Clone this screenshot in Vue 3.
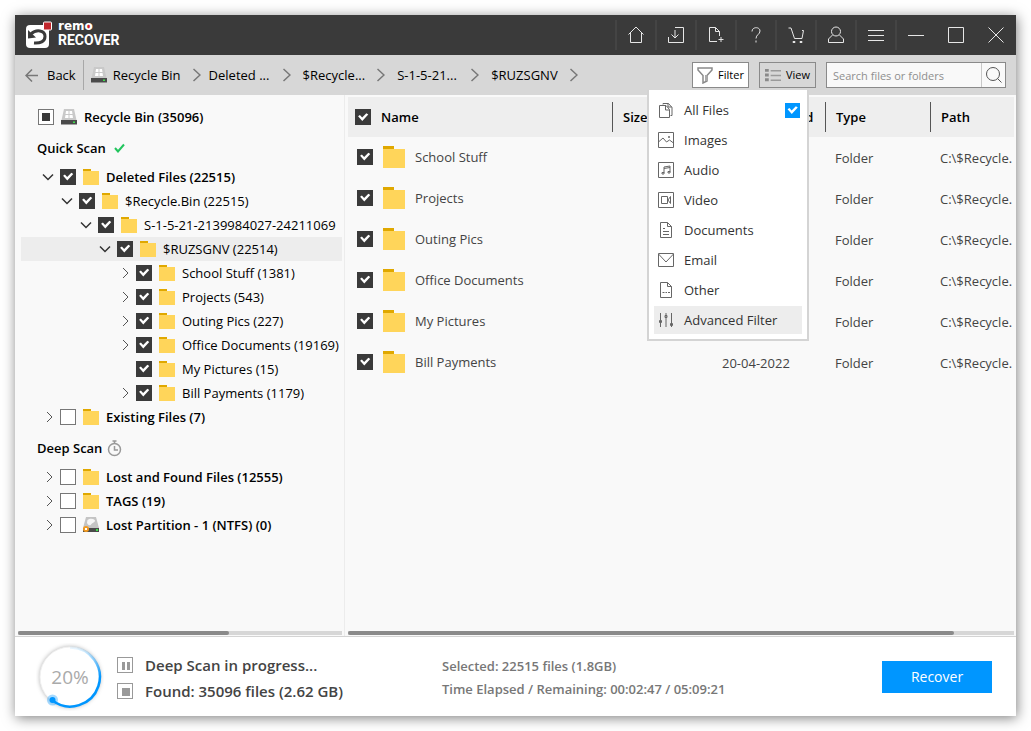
<script setup>
import { ref } from 'vue'

const quickScan = ref([
  { name: 'Deleted Files (22515)', level: 0, open: true, checked: true, bold: true },
  { name: '$Recycle.Bin (22515)', level: 1, open: true, checked: true },
  { name: 'S-1-5-21-2139984027-24211069', level: 2, open: true, checked: true },
  { name: '$RUZSGNV (22514)', level: 3, open: true, checked: true, active: true },
  { name: 'School Stuff (1381)', level: 4, checked: true },
  { name: 'Projects (543)', level: 4, checked: true },
  { name: 'Outing Pics (227)', level: 4, checked: true },
  { name: 'Office Documents (19169)', level: 4, checked: true },
  { name: 'My Pictures (15)', level: 4, checked: true, leaf: true },
  { name: 'Bill Payments (1179)', level: 4, checked: true },
  { name: 'Existing Files (7)', level: 0, checked: false, bold: true },
])
const deepScan = ref([
  { name: 'Lost and Found Files (12555)', level: 0, checked: false, bold: true },
  { name: 'TAGS (19)', level: 0, checked: false, bold: true },
  { name: 'Lost Partition - 1 (NTFS) (0)', level: 0, checked: false, bold: true, drive: true },
])
const sections = [
  { title: 'Quick Scan', done: true, nodes: quickScan },
  { title: 'Deep Scan', done: false, nodes: deepScan },
]
const crumbs = ['Recycle Bin', 'Deleted ...', '$Recycle...', 'S-1-5-21...', '$RUZSGNV']
const files = ref(
  [
    { name: 'School Stuff' },
    { name: 'Projects' },
    { name: 'Outing Pics' },
    { name: 'Office Documents' },
    { name: 'My Pictures' },
    { name: 'Bill Payments', date: '20-04-2022' },
  ].map((f) => ({ ...f, type: 'Folder', path: 'C:\\$Recycle.', checked: true })),
)
const allChecked = ref(true)
const allFiles = ref(true)

const tools = [
  { label: 'Home', d: 'M2.5 9.5 10 2l7.500 7.500M4.500 8v9.500h11V8' },
  { label: 'Import', d: 'M9 2.500h8.500v15h-15V12M9 5v8M5.500 9.500 9 13l3.500-3.500' },
  { label: 'New file', d: 'M11 16.500H3.500v-14h6l4 4V11M9.500 2.500v4h4M15 12v5M12.500 14.500h5' },
  { label: 'Help', d: 'M6 6.500c0-5 8-5 8-.5 0 3.500-4 3.500-4 7.500M10 15.500v2' },
  { label: 'Cart', d: 'M2.500 3H5l3.500 10.500H16L17.500 5.500M7 16.500h2v1H7zM14 16.500h2v1h-2zM16 5.500h1.500' },
  { label: 'Account', d: 'M10 2a4.500 4.500 0 1 1 0 9 4.500 4.500 0 1 1 0-9M6.500 10 2.500 14v3.500h15V14l-4-4' },
  { label: 'Menu', d: 'M2 5.500h16M2 10.500h16M2 15.500h16' },
  { label: 'Minimize', d: 'M2 10.500h16', plain: true },
  { label: 'Maximize', d: 'M2.500 2.500h15v15h-15z', plain: true },
  { label: 'Close', d: 'M2.500 2.500l15 15M17.500 2.500l-15 15', plain: true },
]
const filters = [
  { label: 'All Files', d: 'M1.500 3.500H8l3.500 4v8h-10zM7.500 3.500v4.500h4M5 2.500V1.500h5.500l3.500 4v8h-1.500M10 1.500v3.500h4' },
  { label: 'Images', d: 'M.5.5h15v15H.5zM.5 10 5 6l3.500 4 3-2 4 3M10.500 4.500h1v1h-1z' },
  { label: 'Audio', d: 'M.5.5h15v15H.5zM6 11V5l6-1v6M6 6.500l6-1M4 10.500h2V12H4zM10 9.500h2V11h-2z' },
  { label: 'Video', d: 'M.5.5h15v15H.5zM3.500 4.500h6v7h-6zM10 8l2.500-3.500v7z' },
  { label: 'Documents', d: 'M2.500.5h7l4 4v11h-11zM9.500.5v4h4M5 6.500h2M5 9.500h6M5 12.500h6' },
  { label: 'Email', d: 'M.5 1.500h15v13H.5zM.5 2 8 10l7.500-8' },
  { label: 'Other', d: 'M2.500.5h7l4 4v11h-11zM9.500.5v4h4M4.500 10.500h2M7.500 10.500h1.500M10 10.500h2' },
  { label: 'Advanced Filter', d: 'M2.500 1v14M8 1v14M13.500 1v14M1.500 8.500h2v2h-2zM7 3.500h2v2H7zM12.500 11.500h2v2h-2z', active: true },
]
</script>

<template>
  <div class="window">
    <header class="titlebar">
      <div class="brand">
        <svg class="brand-mark" viewBox="0 0 28 28" aria-hidden="true">
          <rect x="1" y="4" width="23" height="23" rx="4" fill="#fff" />
          <path d="M6 13C11 8 20 9 20 15.500c0 5-5 7-11 6.500" fill="none" stroke="#3a3a3a" stroke-width="3" />
          <path d="M3 9v8.500l8-1z" fill="#3a3a3a" />
          <rect x="18.500" y="1" width="8" height="8" rx="1" fill="#c1272d" stroke="#fff" />
        </svg>
        <div class="brand-text">
          <span class="brand-top">rem<span class="brand-o">o</span></span>
          <span class="brand-name">RECOVER</span>
        </div>
      </div>
      <nav class="tools" aria-label="Window">
        <button v-for="t in tools" :key="t.label" class="tool" :class="{ plain: t.plain }" :aria-label="t.label">
          <svg viewBox="0 0 20 20" aria-hidden="true"><path :d="t.d" /></svg>
        </button>
      </nav>
    </header>

    <div class="toolbar">
      <button class="back">
        <svg viewBox="0 0 13 13" aria-hidden="true"><path d="M13 6.500H1M7 .5l-6 6 6 6" /></svg>
        Back
      </button>
      <nav class="crumbs" aria-label="Location">
        <svg class="drive" viewBox="0 0 16 16" aria-hidden="true">
          <path d="M3 0h10l2.500 11h-15z" fill="#c9c9c9" />
          <path d="M5 2h2.500v3H4.500zM8.500 2H11l.5 3h-3zM4.500 6h3v3H4zM8.500 6h3l.5 3H8.500z" fill="#fff" />
          <path d="M0 11h16v4.500H0z" fill="#4a4a4a" /><path d="M12 12.500h2v1.500h-2z" fill="#3fe04c" />
        </svg>
        <template v-for="c in crumbs" :key="c">
          <a href="#" class="crumb">{{ c }}</a>
          <svg class="crumb-sep" viewBox="0 0 8 14" aria-hidden="true"><path d="M.5 1l6.500 6-6.500 6" /></svg>
        </template>
      </nav>
      <div class="actions">
        <div class="filter-wrap">
          <button class="action filter" aria-haspopup="true" aria-expanded="true">
            <svg viewBox="0 0 16 17" aria-hidden="true"><path d="M1 1h14v2l-5 5.500V14l-4 2V8.500L1 3z" fill="none" stroke="#8a8a8a" stroke-width="1.500" /><path d="M9 8v6" stroke="#aaa" stroke-width="2" /></svg>
            Filter
          </button>
          <div class="menu">
            <div v-for="f in filters" :key="f.label" class="menu-row">
              <button class="menu-item" :class="{ active: f.active }">
                <svg viewBox="0 0 16 16" aria-hidden="true"><path :d="f.d" /></svg>
                {{ f.label }}
              </button>
              <input v-if="f.label === 'All Files'" v-model="allFiles" type="checkbox" class="check blue" aria-label="All Files" />
            </div>
          </div>
        </div>
        <button class="action">
          <svg viewBox="0 0 17 14" aria-hidden="true">
            <path d="M0 0h4v3H0zM0 5h4v3H0zM0 10h4v3H0z" fill="#8a8a8a" /><path d="M6 2h11M6 7h11M6 12h11" stroke="#9a9a9a" stroke-width="1.500" />
          </svg>
          View
        </button>
        <form class="search" role="search" @submit.prevent>
          <input type="text" placeholder="Search files or folders" aria-label="Search files or folders" />
          <button aria-label="Search">
            <svg viewBox="0 0 18 18" aria-hidden="true"><circle cx="8" cy="8" r="6.500" /><path d="M12.500 12.500l4 4" /></svg>
          </button>
        </form>
      </div>
    </div>

    <main class="content">
      <aside class="sidebar">
        <div class="tree">
          <label class="root">
            <input type="checkbox" class="check partial" />
            <svg class="drive" viewBox="0 0 16 16" aria-hidden="true">
              <path d="M3 0h10l2.500 11h-15z" fill="#c9c9c9" />
              <path d="M5 2h2.500v3H4.500zM8.500 2H11l.5 3h-3zM4.500 6h3v3H4zM8.500 6h3l.5 3H8.500z" fill="#fff" />
              <path d="M0 11h16v4.500H0z" fill="#4a4a4a" /><path d="M12 12.500h2v1.500h-2z" fill="#3fe04c" />
            </svg>
            Recycle Bin (35096)
          </label>
          <section v-for="s in sections" :key="s.title">
            <h2 class="scan-title">
              {{ s.title }}
              <svg v-if="s.done" class="done" viewBox="0 0 11 10" aria-hidden="true"><path d="M1 5l3 3.500L10 1.500" /></svg>
              <svg v-else class="timer" viewBox="0 0 15 17" aria-hidden="true">
                <circle cx="7.500" cy="9.500" r="6" /><path d="M5.500 1h4M7.500 1v2.500M7.500 6v4h3.500" />
              </svg>
            </h2>
            <ul>
              <li v-for="n in s.nodes.value" :key="n.name" class="node" :class="{ active: n.active, bold: n.bold }">
                <i v-for="k in n.level" :key="k" class="indent"></i>
                <button class="toggle" :class="{ open: n.open, leaf: n.leaf }" :disabled="n.leaf" :aria-label="'Toggle ' + n.name">
                  <svg viewBox="0 0 12 12" aria-hidden="true"><path :d="n.open ? 'M1 3.500l5 5 5-5' : 'M5 1l5 5-5 5'" /></svg>
                </button>
                <label>
                  <input v-model="n.checked" type="checkbox" class="check" />
                  <svg v-if="n.drive" class="drive" viewBox="0 0 16 16" aria-hidden="true">
                    <path d="M3 0h10l3 11H0z" fill="#c4c4c4" /><path d="M4.500 3c3-2.500 8-1 7.500 1s-3 1.500-4 3.500-4 0-4-2z" fill="#f6f6f6" />
                    <path d="M0 11h16v4H0z" fill="#4a4a4a" /><path d="M13 12h2v2h-2z" fill="#3fe04c" />
                    <circle cx="3" cy="12" r="3" fill="#f39a1f" /><path d="M2 11l2 2M4 11l-2 2" stroke="#fff" />
                  </svg>
                  <span v-else class="folder"></span>
                  <span class="node-name">{{ n.name }}</span>
                </label>
              </li>
            </ul>
          </section>
        </div>
        <div class="scrollbar"><div class="thumb side-thumb"></div></div>
      </aside>

      <section class="list">
        <div class="list-body">
          <table>
            <colgroup>
              <col /><col class="c-size" /><col class="c-date" /><col class="c-type" /><col class="c-path" />
            </colgroup>
            <thead>
              <tr>
                <th class="name-cell"><label><input v-model="allChecked" type="checkbox" class="check" /><span class="head-name">Name</span></label></th>
                <th>Size</th>
                <th>Date Accessed</th>
                <th>Type</th>
                <th>Path</th>
              </tr>
            </thead>
            <tbody>
              <tr v-for="f in files" :key="f.name">
                <td class="name-cell">
                  <label><input v-model="f.checked" type="checkbox" class="check" /><span class="folder large"></span>{{ f.name }}</label>
                </td>
                <td></td>
                <td>{{ f.date }}</td>
                <td>{{ f.type }}</td>
                <td>{{ f.path }}</td>
              </tr>
            </tbody>
          </table>
        </div>
        <div class="scrollbar"><div class="thumb list-thumb"></div></div>
      </section>
    </main>

    <footer class="status">
      <div class="ring" role="progressbar" aria-label="Scan progress" aria-valuenow="20" aria-valuemin="0" aria-valuemax="100">
        <svg viewBox="0 0 68 68" aria-hidden="true">
          <defs>
            <linearGradient id="arc" gradientUnits="userSpaceOnUse" x1="0" y1="4" x2="0" y2="34">
              <stop offset="0" stop-color="#0096ff" stop-opacity="0.050" /><stop offset="1" stop-color="#0096ff" />
            </linearGradient>
          </defs>
          <circle class="ring-base" cx="34" cy="34" r="30" />
          <path d="M34 4.500A29.500 29.500 0 1 1 16.500 57.500" fill="none" stroke="url(#arc)" stroke-width="2.500" />
          <circle cx="16.500" cy="57" r="5.500" fill="#0096ff" fill-opacity="0.350" />
          <circle cx="16.500" cy="57" r="3" fill="#0096ff" />
        </svg>
        <span>20%</span>
      </div>
      <div class="scan-info">
        <div class="scan-line">
          <button class="ctl" aria-label="Pause"><svg viewBox="0 0 16 16" aria-hidden="true"><path d="M4 4h3v8H4zM9 4h3v8H9z" /></svg></button>
          <span>Deep Scan in progress...</span>
        </div>
        <div class="scan-line">
          <button class="ctl" aria-label="Stop"><svg viewBox="0 0 16 16" aria-hidden="true"><path d="M4 4h8v8H4z" /></svg></button>
          <span>Found: 35096 files (2.62 GB)</span>
        </div>
      </div>
      <div class="summary">
        <div>Selected: 22515 files (1.8GB)</div>
        <div>Time Elapsed / Remaining: 00:02:47 / 05:09:21</div>
      </div>
      <button class="recover">Recover</button>
    </footer>
  </div>
</template>

<style>
body {
  background: #fff;
}
#app {
  display: flex;
  min-height: 100vh;
}
</style>

<style scoped>
* {
  box-sizing: border-box;
}
.window {
  flex: 1;
  min-width: 0;
  margin: 15px;
  display: flex;
  flex-direction: column;
  background: #f9f9f9;
  box-shadow: 1px 2px 12px rgba(0, 0, 0, 0.5);
  font: 13px/20px "Open Sans", "Noto Sans", sans-serif;
  color: #000;
}
button {
  font: inherit;
  color: inherit;
  background: none;
  border: 0;
  padding: 0;
}
svg {
  display: block;
  flex: none;
}
ul {
  list-style: none;
  margin: 0;
  padding: 0;
}

.titlebar {
  display: flex;
  justify-content: space-between;
  align-items: center;
  height: 40px;
  padding: 0 1px 0 10px;
  background: #3a3a3a;
}
.brand {
  display: flex;
  align-items: center;
  gap: 5px;
}
.brand-mark {
  width: 28px;
  height: 28px;
}
.brand-text {
  display: flex;
  flex-direction: column;
  color: #fff;
}
.brand-top {
  font: bold 12px/9px "DejaVu Sans", sans-serif;
}
.brand-o {
  background: linear-gradient(#d0202a, #d0202a) 50% 60% / 4px 5px no-repeat;
}
.brand-name {
  font: bold 14px/18px Roboto, sans-serif;
}
.tools {
  display: flex;
  align-items: center;
}
.tool {
  width: 40px;
  height: 30px;
  display: grid;
  place-items: center;
  border-left: 2px solid #444;
}
.tool.plain {
  border-left-color: transparent;
}
.tool:nth-child(8) {
  border-left-color: #444;
}
.tool svg {
  width: 20px;
  height: 20px;
  fill: none;
  stroke: #e6e6e6;
}

.toolbar {
  display: flex;
  align-items: center;
  height: 40px;
  padding: 0 10px;
  background: #d7d7d7;
}
.back {
  display: flex;
  align-items: center;
  gap: 9px;
  height: 30px;
  padding-right: 7px;
  border-right: 1px solid #a8a8a8;
}
.back svg {
  width: 13px;
  height: 13px;
  fill: none;
  stroke: #777;
  stroke-width: 1.500;
}
.crumbs {
  display: flex;
  align-items: center;
  gap: 12px;
  padding-left: 7px;
  white-space: nowrap;
}
.crumbs .drive {
  margin-right: -6px;
}
.crumb {
  min-width: 62px;
  color: inherit;
  text-decoration: none;
}
.crumb-sep {
  width: 8px;
  height: 14px;
  fill: none;
  stroke: #777;
  stroke-width: 1.500;
}
.crumb-sep:nth-of-type(2) {
  margin-right: -4px;
}
.drive {
  width: 16px;
  height: 16px;
}
.actions {
  display: flex;
  gap: 10px;
  margin-left: auto;
}
.filter-wrap {
  position: relative;
}
.action {
  display: flex;
  align-items: center;
  justify-content: center;
  gap: 5px;
  width: 57px;
  height: 26px;
  border: 1px solid #8a8a8a;
  font-size: 11px;
}
.action svg {
  width: 16px;
  height: 17px;
}
.filter {
  background: #fff;
}
.search {
  display: flex;
  width: 180px;
  height: 26px;
  border: 1px solid #8a8a8a;
  background: #f9f9f9;
}
.search input {
  flex: 1;
  min-width: 0;
  border: 0;
  padding: 2px 6px 0;
  background: none;
  font: inherit;
  font-size: 11px;
}
.search input::placeholder {
  color: #8f8f8f;
}
.search button {
  width: 24px;
  display: grid;
  place-items: center;
  border-left: 1px solid #c8c8c8;
}
.search svg {
  width: 18px;
  height: 18px;
  fill: none;
  stroke: #555;
}

.menu {
  position: absolute;
  z-index: 2;
  top: 28px;
  left: -45px;
  width: 162px;
  padding: 5px 5px 4px;
  background: #fff;
  border: 2px solid #d4d4d4;
  border-top: 0;
}
.menu-row {
  display: flex;
  align-items: center;
  height: 30px;
}
.menu-item {
  flex: 1;
  display: flex;
  align-items: center;
  gap: 10px;
  height: 28px;
  padding-left: 4px;
  color: #333;
}
.menu-item.active {
  background: #ededed;
}
.menu-item svg {
  width: 16px;
  height: 16px;
  fill: none;
  stroke: #666;
}
.menu-row .check {
  margin-right: 2px;
}

.check {
  appearance: none;
  flex: none;
  width: 16px;
  height: 16px;
  margin: 0;
  border: 1px solid #777;
  background: #fff;
  display: grid;
  place-items: center;
}
.check:checked {
  background: #3a3a3a;
  border-color: #3a3a3a;
}
.check:checked::before {
  content: "";
  width: 12px;
  height: 10px;
  background: #fff;
  clip-path: polygon(9% 42%, 24% 30%, 43% 56%, 78% 12%, 94% 26%, 44% 90%);
}
.check.blue:checked {
  width: 15px;
  height: 15px;
  background: #0096ff;
  border-color: #0096ff;
}
.check.partial::before {
  content: "";
  width: 8px;
  height: 8px;
  background: #3a3a3a;
}

.content {
  flex: 1;
  display: flex;
  min-height: 0;
  border-bottom: 1px solid #d4d4d4;
}
.sidebar {
  width: 330px;
  display: flex;
  flex-direction: column;
  border-right: 1px solid #ececec;
  padding: 0 2px 1px 3px;
}
.tree {
  flex: 1;
  padding: 10px 0 0 3px;
}
.root {
  display: flex;
  align-items: center;
  gap: 7px;
  height: 24px;
  padding-left: 17px;
  font-weight: 600;
}
.scan-title {
  display: flex;
  align-items: center;
  gap: 5px;
  height: 36px;
  margin: 0;
  padding: 2px 0 0 16px;
  font-size: 13px;
  font-weight: 600;
}
.done {
  width: 11px;
  height: 10px;
  margin-left: 3px;
  fill: none;
  stroke: #22c55e;
  stroke-width: 2;
}
.timer {
  width: 15px;
  height: 17px;
  fill: none;
  stroke: #999;
  stroke-width: 1.500;
}
.node {
  display: flex;
  align-items: center;
  height: 24px;
  padding: 0 0 1px 21px;
  overflow: hidden;
  white-space: nowrap;
}
.node.active {
  background: #ededed;
}
.bold {
  font-weight: 600;
}
.node label {
  display: flex;
  align-items: center;
  gap: 7px;
}
.indent {
  flex: none;
  width: 19px;
}
.toggle {
  flex: none;
  width: 12px;
  height: 12px;
  margin-right: 6px;
}
.toggle svg {
  width: 12px;
  height: 12px;
  fill: none;
  stroke: #555;
}
.toggle.open svg {
  stroke: #333;
  stroke-width: 1.500;
}
.toggle.leaf {
  visibility: hidden;
}
.folder {
  flex: none;
  width: 16px;
  height: 16px;
  background:
    linear-gradient(#e0a800, #e0a800) 0 0 / 8px 2px no-repeat,
    linear-gradient(#ffd55a, #ffd55a) 0 2px / 100% 14px no-repeat;
}
.folder.large {
  width: 22px;
  height: 22px;
  margin: 0 10px;
  background:
    linear-gradient(#e0a800, #e0a800) 0 0 / 11px 3px no-repeat,
    linear-gradient(#ffd55a, #ffd55a) 0 3px / 100% 19px no-repeat;
}

.scrollbar {
  height: 4px;
  background: #d7d7d7;
}
.thumb {
  height: 4px;
  border-radius: 2px;
  background: #8a8a8a;
}
.side-thumb {
  width: 65%;
}
.list-thumb {
  width: 91%;
}

.list {
  flex: 1;
  min-width: 0;
  display: flex;
  flex-direction: column;
  padding: 2px 2px 1px 3px;
}
.list-body {
  flex: 1;
  overflow: hidden;
}
table {
  width: 100%;
  table-layout: fixed;
  border-collapse: collapse;
}
.c-size {
  width: 100px;
}
.c-date {
  width: 113px;
}
.c-type {
  width: 105px;
}
.c-path {
  width: 84px;
}
th,
td {
  padding: 0 0 0 10px;
  text-align: left;
  white-space: nowrap;
  overflow: hidden;
}
th {
  height: 40px;
  padding-left: 11px;
  font-weight: 600;
  background:
    linear-gradient(#555, #555) 0 50% / 1px 30px no-repeat,
    #eee;
}
td {
  height: 41px;
  color: #444;
}
th.name-cell {
  padding-left: 7px;
  background: #eee;
}
td.name-cell {
  padding: 0 0 2px 9px;
}
.name-cell label {
  display: flex;
  align-items: center;
}
.head-name {
  margin-left: 10px;
}

.status {
  display: flex;
  align-items: center;
  height: 79px;
  padding: 0 24px 0 21px;
  background: #fff;
}
.ring {
  display: grid;
  place-items: center;
  width: 68px;
}
.ring svg,
.ring span {
  grid-area: 1 / 1;
}
.ring svg {
  width: 68px;
  height: 68px;
}
.ring-base {
  fill: #fff;
  stroke: #f0f0f0;
  filter: drop-shadow(0 0 2px rgba(0, 0, 0, 0.3));
}
.ring span {
  font-size: 19px;
  color: #aaa;
}
.scan-info {
  width: 325px;
  margin-left: 13px;
  padding-top: 3px;
  font-size: 15px;
  font-weight: 600;
  color: #444;
}
.scan-line {
  display: flex;
  align-items: center;
  gap: 12px;
  height: 26px;
}
.ctl {
  width: 16px;
  height: 16px;
  border: 1px solid #999;
  display: grid;
  place-items: center;
}
.ctl svg {
  width: 16px;
  height: 16px;
  fill: #999;
}
.summary {
  padding-top: 2px;
  font-size: 13px;
  line-height: 23px;
  font-weight: 600;
  color: #777;
}
.recover {
  width: 110px;
  height: 32px;
  margin-left: auto;
  background: #0096ff;
  color: #fff;
  font-size: 14px;
}
</style>
